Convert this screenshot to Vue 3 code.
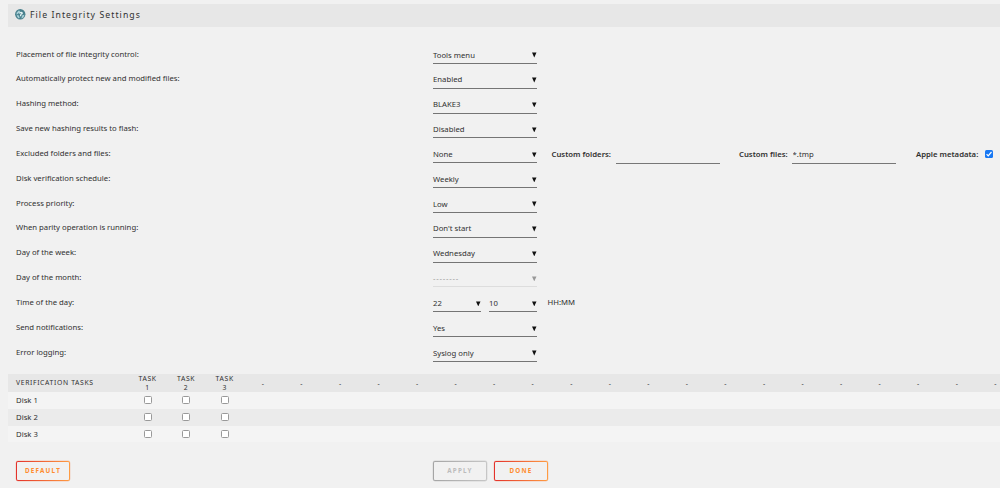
<script setup>
import { ref } from "vue";

const settings = ref([
  { label: "Placement of file integrity control:", value: "Tools menu" },
  { label: "Automatically protect new and modified files:", value: "Enabled" },
  { label: "Hashing method:", value: "BLAKE3" },
  { label: "Save new hashing results to flash:", value: "Disabled" },
  { label: "Excluded folders and files:", value: "None", custom: true },
  { label: "Disk verification schedule:", value: "Weekly" },
  { label: "Process priority:", value: "Low" },
  { label: "When parity operation is running:", value: "Don't start" },
  { label: "Day of the week:", value: "Wednesday" },
  { label: "Day of the month:", value: "--------", disabled: true },
  { label: "Time of the day:", value: "22", minutes: "10" },
  { label: "Send notifications:", value: "Yes" },
  { label: "Error logging:", value: "Syslog only" },
]);

const customFolders = ref("");
const customFiles = ref("*.tmp");
const appleMetadata = ref(true);

const disks = ["Disk 1", "Disk 2", "Disk 3"];
const tasks = 3;
const columns = 23;
</script>

<template>
  <main class="page">
    <header class="title">
      <svg class="title__icon" viewBox="0 0 20 20">
        <circle cx="10" cy="10" r="9.8" fill="#477f8c" />
        <path d="M3 7 7 3l3 1-3 4-4 3zM3 13l3-2 3 5-2 2zM14 12l4-1-2 5-4 2z" fill="#a9d1d8" />
        <path d="M8 6q5-2 7 1 1 3-3 4v3H9l1-4 2-1-1-1-3 1z" fill="#e2f1f2" />
      </svg>
      <span class="title__text">File Integrity Settings</span>
    </header>

    <form class="settings">
      <div v-for="item in settings" :key="item.label" class="settings__row">
        <label class="settings__label">{{ item.label }}</label>
        <div class="settings__fields">
          <div
            class="select"
            :class="{
              'select--disabled': item.disabled,
              'select--narrow': item.minutes,
            }"
          >
            <span>{{ item.value }}</span>
            <svg class="select__arrow" viewBox="0 0 5 6"><path d="M0 .5h5L2.500 6z" /></svg>
          </div>
          <template v-if="item.minutes">
            <div class="select select--narrow select--minutes">
              <span>{{ item.minutes }}</span>
              <svg class="select__arrow" viewBox="0 0 5 6"><path d="M0 .5h5L2.500 6z" /></svg>
            </div>
            <span class="settings__unit">HH:MM</span>
          </template>
          <template v-if="item.custom">
            <b class="custom custom--folders">Custom folders:</b>
            <input v-model="customFolders" class="input" type="text" />
            <b class="custom custom--files">Custom files:</b>
            <input v-model="customFiles" class="input" type="text" />
            <b class="custom custom--apple">Apple metadata:</b>
            <input v-model="appleMetadata" class="check check--filled" type="checkbox" />
          </template>
        </div>
      </div>
    </form>

    <section class="tasks">
      <div class="tasks__row tasks__row--head">
        <span class="tasks__name">Verification tasks</span>
        <span v-for="n in columns" :key="n" class="tasks__cell">
          <template v-if="n <= tasks">Task<br />{{ n }}</template>
          <template v-else>-</template>
        </span>
      </div>
      <div v-for="disk in disks" :key="disk" class="tasks__row">
        <span class="tasks__name">{{ disk }}</span>
        <span v-for="n in tasks" :key="n" class="tasks__cell">
          <input class="check" type="checkbox" />
        </span>
      </div>
    </section>

    <footer class="actions">
      <div class="actions__left">
        <button class="button" type="button">Default</button>
      </div>
      <button class="button button--disabled" type="button" disabled>Apply</button>
      <button class="button button--done" type="button">Done</button>
    </footer>
  </main>
</template>

<style>
body {
  background: #f1f1f1;
  overflow: hidden;
}
</style>

<style scoped>
.page {
  box-sizing: border-box;
  height: 488px;
  padding: 4px 0 0 8px;
  overflow: hidden;
  background: #f1f1f1;
  color: #303030;
  font: 7.73px/10px "Noto Sans", sans-serif;
}

.title {
  display: flex;
  align-items: center;
  height: 22.5px;
  padding-left: 7px;
  background: #e7e7e7;
}

.title__icon {
  width: 10.5px;
  height: 10.5px;
  margin: -2px 4.5px 0 0;
}

.title__text {
  font-size: 8.7px;
  letter-spacing: 1.06px;
}

.settings {
  padding: 15.1px 0 0 8px;
}

.settings__row {
  display: flex;
  height: 24.83px;
}

.settings__label {
  width: 417px;
  padding-top: 7px;
}

.settings__fields {
  display: flex;
  white-space: nowrap;
}

.select {
  display: flex;
  box-sizing: border-box;
  justify-content: space-between;
  width: 104px;
  height: 22.4px;
  padding-top: 8px;
  border-bottom: 1px solid #757575;
}

.select--narrow {
  width: 48px;
}

.select--minutes {
  margin-left: 8px;
}

.select--disabled {
  border-color: #ddd;
  color: #999;
  letter-spacing: 0.75px;
}

.select__arrow {
  width: 4.5px;
  height: 5.4px;
  margin: 2.8px 0.3px 0 0;
  fill: #111;
}

.select--disabled .select__arrow {
  fill: #999;
}

.settings__unit {
  padding: 7px 0 0 10.5px;
}

.custom {
  padding-top: 7.7px;
  font-weight: 600;
}

.custom--folders {
  width: 64px;
  margin-left: 14.5px;
}

.custom--files {
  width: 53px;
  margin-left: 19.5px;
}

.custom--apple {
  width: 69px;
  margin-left: 20px;
}

.input {
  box-sizing: border-box;
  width: 104px;
  height: 23px;
  padding: 7.4px 0 4px 0.6px;
  border: 0;
  border-bottom: 1px solid #777;
  outline: 0;
  background: transparent;
  color: inherit;
  font: inherit;
}

.check {
  box-sizing: border-box;
  width: 8px;
  height: 8px;
  margin: 0;
  border: 1px solid #999;
  border-radius: 1.5px;
  appearance: none;
  background: #fff;
}

.check--filled {
  margin-top: 9px;
  border: 0;
  background: #1878f3 url("data:image/svg+xml,%3Csvg xmlns='http://www.w3.org/2000/svg' viewBox='0 0 8 8'%3E%3Cpath d='M1.6 4.200 3.200 5.900 6.500 2' fill='none' stroke='white' stroke-width='1.200'/%3E%3C/svg%3E");
}

.tasks {
  margin-top: 9.6px;
}

.tasks__row {
  display: flex;
  align-items: center;
  height: 16.7px;
  background: #f4f4f4;
}

.tasks__row:nth-child(odd) {
  background: #ebebeb;
}

.tasks__row .check {
  margin-top: -0.6px;
}

.tasks__row.tasks__row--head {
  height: 18.3px;
  background: #e7e7e7;
  font-size: 6.8px;
  line-height: 9px;
  letter-spacing: 0.65px;
  text-transform: uppercase;
}

.tasks__name {
  flex: none;
  width: 112px;
  margin-top: -0.6px;
  padding-left: 8px;
}

.tasks__cell {
  display: flex;
  flex: none;
  justify-content: center;
  width: 38.56px;
  padding-left: 0.6px;
  box-sizing: border-box;
  text-align: center;
}

.actions {
  display: flex;
  padding: 18.5px 0 0 8px;
}

.actions__left {
  width: 417px;
}

.button {
  box-sizing: border-box;
  width: 54px;
  height: 20px;
  padding: 0;
  border: 1.5px solid transparent;
  border-radius: 2px;
  background: linear-gradient(#f1f1f1, #f1f1f1) padding-box,
    linear-gradient(90deg, #e4312c, #ff9c42) border-box;
  box-shadow: 0 0 0 0.4px rgba(240, 110, 50, 0.3);
  color: #ff8c2f;
  font: bold 6.3px/10px "Noto Sans", sans-serif;
  letter-spacing: 1.2px;
  text-align: center;
  text-transform: uppercase;
}

.button--disabled {
  background: linear-gradient(#f1f1f1, #f1f1f1) padding-box,
    linear-gradient(90deg, #a5a5a5, #c6c6c6) border-box;
  box-shadow: 0 0 0 0.4px rgba(150, 150, 150, 0.3);
  color: #bcbcbc;
}

.button--done {
  margin-left: 7px;
}
</style>
